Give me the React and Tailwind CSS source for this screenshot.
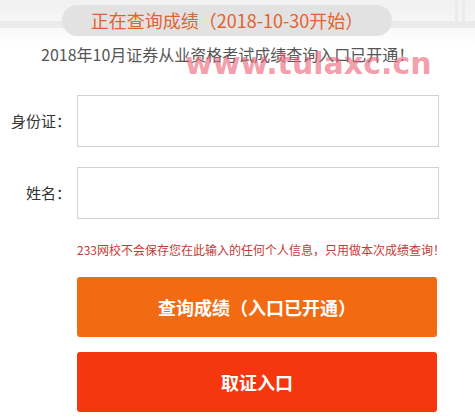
import React from 'react';

const cjk = { fontFamily: '"Noto Sans CJK SC", "Noto Sans", sans-serif' };

const Field = ({ label }) => (
    <div className="flex items-center gap-[6px]">
        <label className="w-[71px] text-right text-[15px] text-[#333]">{label}</label>
        <input className="w-[362px] h-[52px] border border-[#d2d2d2] bg-white outline-none px-3" />
    </div>
);

const App = () => {
    return (
        <div className="relative w-[475px] h-[419px] bg-white overflow-hidden" style={cjk}>
            {/* faint frame behind the title */}
            <div className="absolute inset-x-0 top-0 h-[44px] bg-gradient-to-b from-[#f1f1f1] via-[#f6f6f6] to-white" />
            <div className="absolute inset-x-0 top-[21px] h-[7px] bg-[#ebebeb]" />
            <div className="absolute top-0 right-[10px] w-[10px] h-[28px] border-x-[3px] border-[#ebebeb]" />

            <div className="relative pt-[5px]">
                <div className="ml-[62px] w-[330px] h-[31px] rounded-full bg-[#e2e2e2] flex items-center justify-center text-[18px] text-[#e3622c]">
                    正在查询成绩（2018-10-30开始）
                </div>
                <p className="ml-[41px] mt-[8px] text-[16px] leading-[20px] text-[#555]">
                    2018年10月证券从业资格考试成绩查询入口已开通！
                </p>
            </div>

            <div
                className="absolute left-[185px] top-[44px] text-[30px] font-bold text-[rgba(236,96,116,0.62)] leading-[40px]"
                style={{ fontFamily: '"DejaVu Sans", sans-serif' }}
            >
                www.tulaxc.cn
            </div>

            <div className="mt-[31px] flex flex-col gap-[20px]">
                <Field label="身份证：" />
                <Field label="姓名：" />
            </div>

            <div className="ml-[77px] mt-[23px]">
                <p className="text-[12px] leading-[16px] text-[#c43a35] whitespace-nowrap">
                    233网校不会保存您在此输入的任何个人信息，只用做本次成绩查询！
                </p>
                <button className="mt-[19px] w-[360px] h-[60px] rounded-[3px] bg-[#f26b12] text-white text-[18px] font-bold">
                    查询成绩（入口已开通）
                </button>
                <button className="mt-[15px] w-[360px] h-[60px] rounded-[3px] bg-[#f5370f] text-white text-[18px] font-bold">
                    取证入口
                </button>
            </div>
        </div>
    );
};

export default App;
